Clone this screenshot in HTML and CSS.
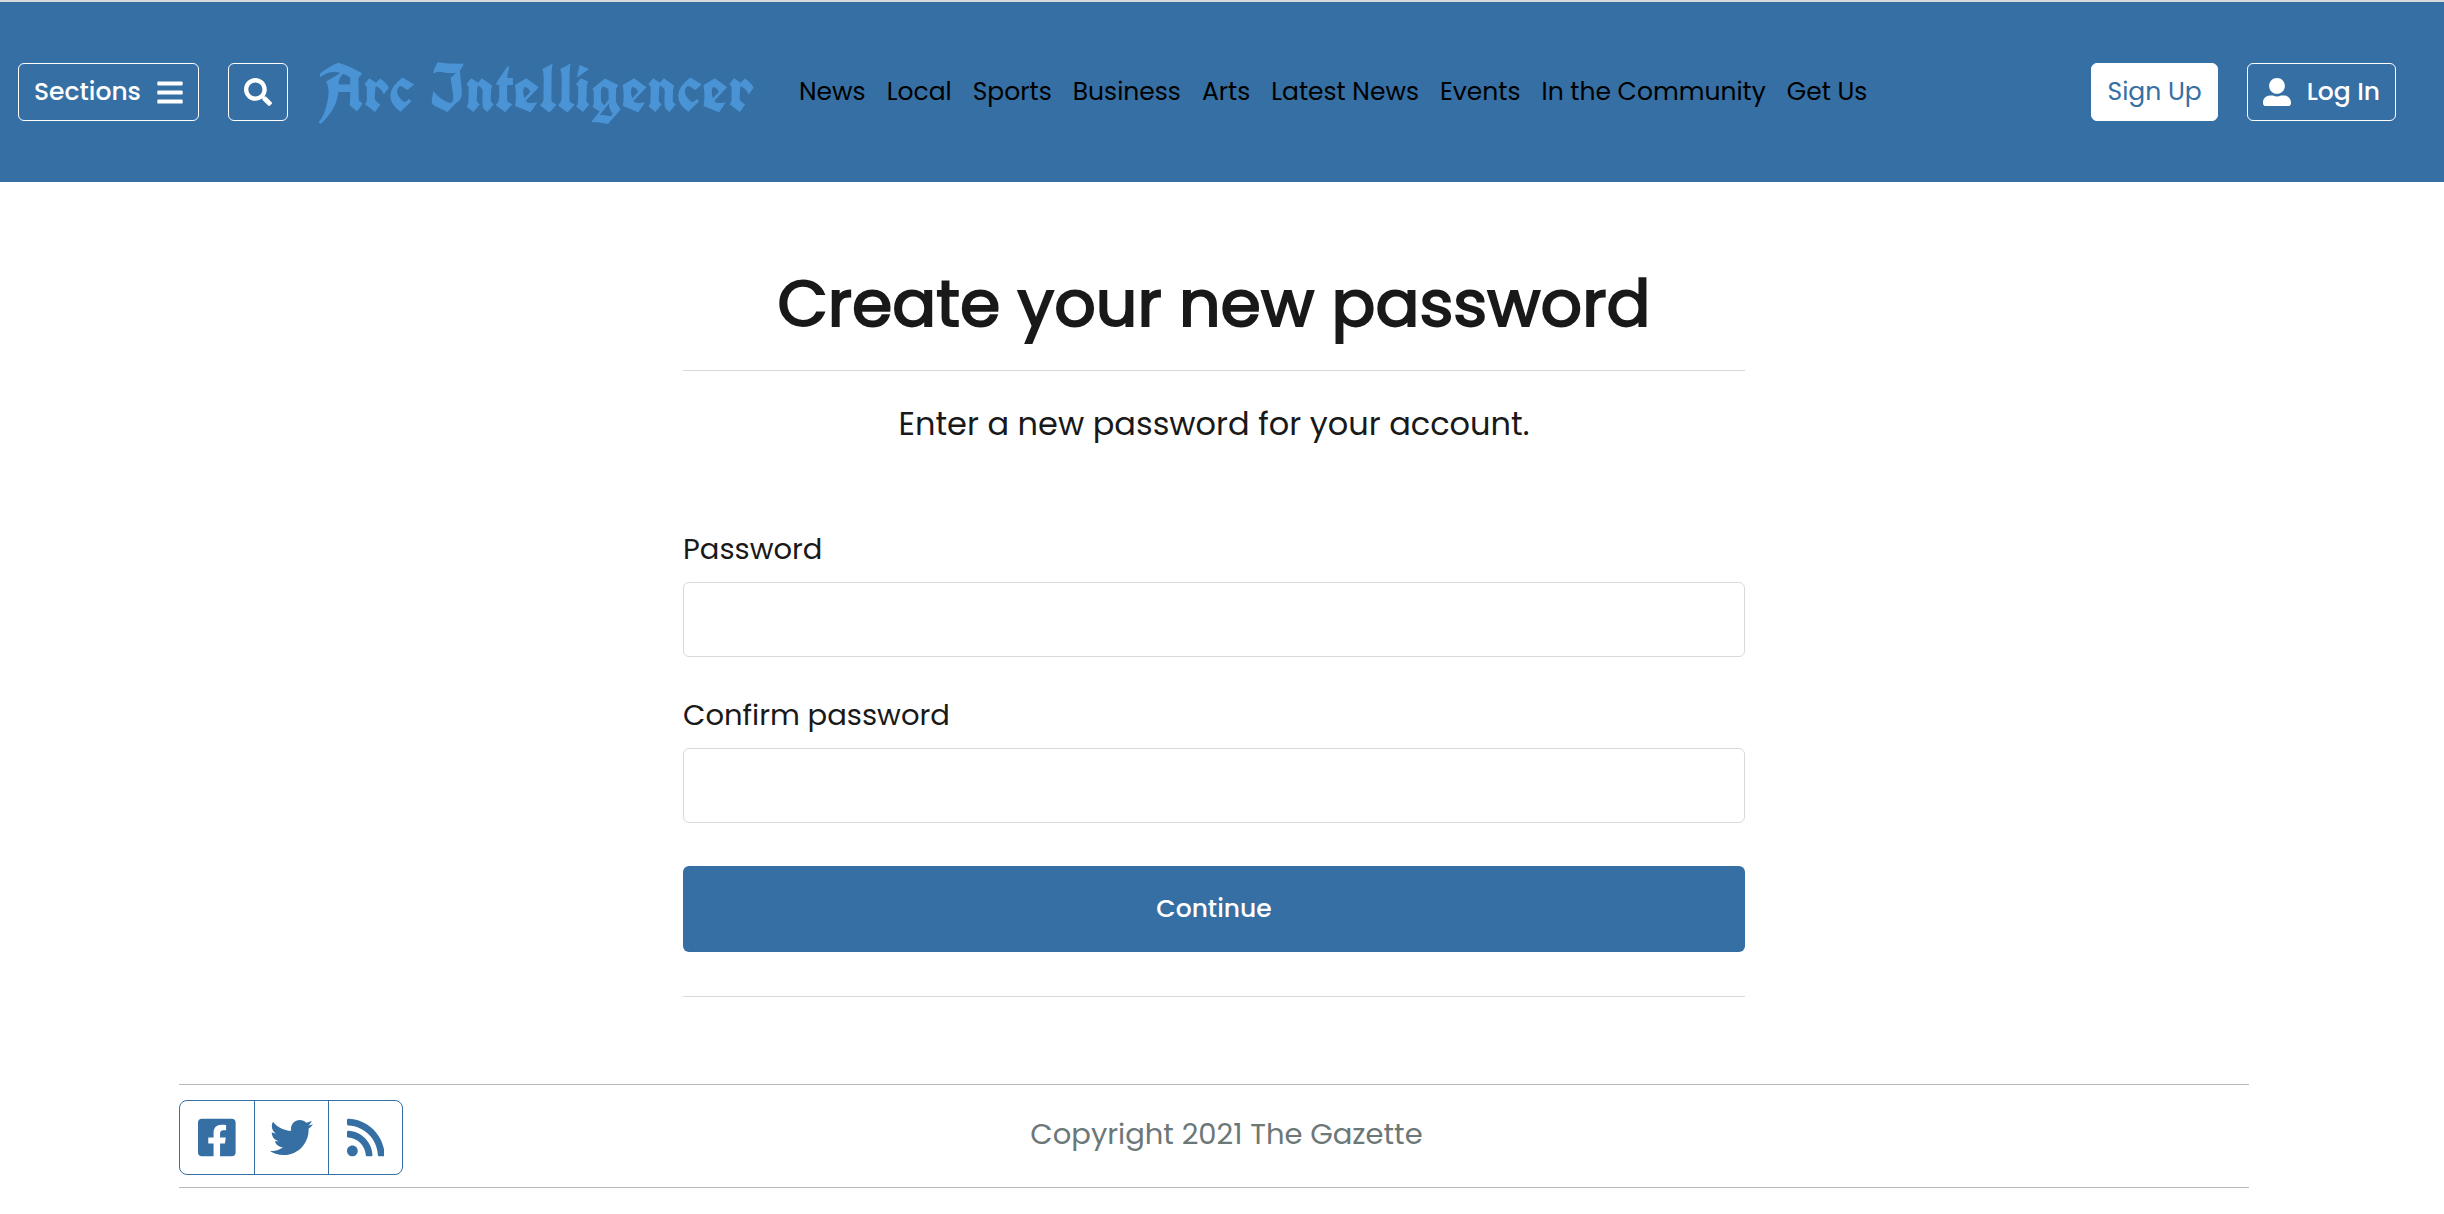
FILE: index.html
```html
<!DOCTYPE html>
<html lang="en">
<head>
<meta charset="utf-8">
<meta name="viewport" content="width=device-width, initial-scale=1">
<title>Create your new password</title>
<link rel="stylesheet" href="styles.css">
</head>
<body>
<header class="header">
  <button class="btn btn-outline" type="button">Sections
    <svg class="icon-bars" viewBox="0 0 448 512" aria-hidden="true"><path d="M16 132h416c8.837 0 16-7.163 16-16V76c0-8.837-7.163-16-16-16H16C7.163 60 0 67.163 0 76v40c0 8.837 7.163 16 16 16zm0 160h416c8.837 0 16-7.163 16-16v-40c0-8.837-7.163-16-16-16H16c-8.837 0-16 7.163-16 16v40c0 8.837 7.163 16 16 16zm0 160h416c8.837 0 16-7.163 16-16v-40c0-8.837-7.163-16-16-16H16c-8.837 0-16 7.163-16 16v40c0 8.837 7.163 16 16 16z"/></svg>
  </button>
  <button class="btn btn-outline" type="button" aria-label="Search">
    <svg class="icon" viewBox="0 0 512 512" aria-hidden="true"><path d="M505 442.7L405.3 343c-4.5-4.5-10.6-7-17-7H372c27.6-35.3 44-79.7 44-128C416 93.1 322.9 0 208 0S0 93.1 0 208s93.1 208 208 208c48.3 0 92.7-16.4 128-44v16.3c0 6.4 2.5 12.5 7 17l99.7 99.7c9.4 9.4 24.6 9.4 33.9 0l28.3-28.3c9.4-9.4 9.4-24.6.1-34zM208 336c-70.7 0-128-57.2-128-128 0-70.7 57.2-128 128-128 70.7 0 128 57.2 128 128 0 70.7-57.2 128-128 128z"/></svg>
  </button>
  <a class="logo" href="#">Arc Intelligencer</a>
  <nav class="nav">
    <a href="#">News</a>
    <a href="#">Local</a>
    <a href="#">Sports</a>
    <a href="#">Business</a>
    <a href="#">Arts</a>
    <a href="#">Latest News</a>
    <a href="#">Events</a>
    <a href="#">In the Community</a>
    <a href="#">Get Us</a>
  </nav>
  <div class="account">
    <button class="btn btn-solid" type="button">Sign Up</button>
    <button class="btn btn-outline" type="button">
      <svg class="icon" viewBox="0 0 512 512" aria-hidden="true"><path d="M256 288c79.5 0 144-64.5 144-144S335.500 0 256 0 112 64.500 112 144s64.500 144 144 144zm128 32h-55.100c-22.200 10.200-46.900 16-72.900 16s-50.600-5.800-72.900-16H128C57.300 320 0 377.300 0 448v16c0 26.500 21.500 48 48 48h416c26.500 0 48-21.500 48-48v-16c0-70.700-57.300-128-128-128z"/></svg>
      Log In</button>
  </div>
</header>
<div class="page">
  <main class="main">
    <h1 class="title">Create your new password</h1>
    <p class="lead">Enter a new password for your account.</p>
    <form class="form">
      <div class="field">
        <label for="password">Password</label>
        <input id="password" type="password">
      </div>
      <div class="field">
        <label for="confirm">Confirm password</label>
        <input id="confirm" type="password">
      </div>
      <button class="submit" type="submit">Continue</button>
    </form>
  </main>
  <footer class="footer">
    <div class="social">
      <a href="#" aria-label="Facebook"><svg viewBox="0 0 448 512" aria-hidden="true"><path d="M400 32H48A48 48 0 0 0 0 80v352a48 48 0 0 0 48 48h137.250V327.690h-63V256h63v-54.640c0-62.150 37-96.480 93.670-96.480 27.140 0 55.520 4.840 55.520 4.840v61h-31.270c-30.810 0-40.420 19.120-40.420 38.730V256h68.780l-11 71.690h-57.780V480H400a48 48 0 0 0 48-48V80a48 48 0 0 0-48-48z"/></svg></a>
      <a href="#" aria-label="Twitter"><svg viewBox="0 0 512 512" aria-hidden="true"><path d="M459.370 151.716c.325 4.548.325 9.097.325 13.645 0 138.720-105.583 298.558-298.558 298.558-59.452 0-114.680-17.219-161.137-47.106 8.447.974 16.568 1.299 25.340 1.299 49.055 0 94.213-16.568 130.274-44.832-46.132-.975-84.792-31.188-98.112-72.772 6.498.974 12.995 1.624 19.818 1.624 9.421 0 18.843-1.300 27.614-3.573-48.081-9.747-84.143-51.980-84.143-102.985v-1.299c13.969 7.797 30.214 12.670 47.431 13.319-28.264-18.843-46.781-51.005-46.781-87.391 0-19.492 5.197-37.360 14.294-52.954 51.655 63.675 129.300 105.258 216.365 109.807-1.624-7.797-2.599-15.918-2.599-24.040 0-57.828 46.782-104.934 104.934-104.934 30.213 0 57.502 12.670 76.670 33.137 23.715-4.548 46.456-13.320 66.599-25.340-7.798 24.366-24.366 44.833-46.132 57.827 21.117-2.273 41.584-8.122 60.426-16.243-14.292 20.791-32.161 39.308-52.628 54.253z"/></svg></a>
      <a href="#" aria-label="RSS"><svg viewBox="0 0 448 512" aria-hidden="true"><path d="M128.081 415.959c0 35.369-28.672 64.041-64.041 64.041S0 451.328 0 415.959s28.672-64.041 64.041-64.041 64.040 28.673 64.040 64.041zm175.660 47.250c-8.354-154.600-132.185-278.587-286.950-286.950C7.656 175.765 0 183.105 0 192.253v48.069c0 8.415 6.490 15.472 14.887 16.018 111.832 7.284 201.473 96.702 208.772 208.772.547 8.397 7.604 14.887 16.018 14.887h48.069c9.149.001 16.489-7.655 15.995-16.790zm144.249.288C439.596 229.677 251.465 40.445 16.503 32.010 7.473 31.686 0 38.981 0 48.016v48.068c0 8.625 6.835 15.645 15.453 15.999 191.179 7.839 344.627 161.316 352.465 352.465.353 8.618 7.373 15.453 15.999 15.453h48.068c9.034-.001 16.329-7.474 16.005-16.504z"/></svg></a>
    </div>
    <p class="copyright">Copyright 2021 The Gazette</p>
  </footer>
</div>
</body>
</html>
```
FILE: styles.css
```css
:root {
  --blue: #356fa4;
  --ink: #191919;
  --rule: #d9d9d9;
}

* { box-sizing: border-box; }

body {
  margin: 0;
  background: #fff;
  color: var(--ink);
  font-family: Poppins, Inter, "Liberation Sans", sans-serif;
  font-size: 25px;
}

h1, p { margin: 0; }

button { font: inherit; cursor: pointer; }

.header {
  display: flex;
  align-items: center;
  min-height: 182px;
  padding: 0 48px 0 18px;
  border-top: 2px solid #d5d9dc;
  background: var(--blue);
}

.btn {
  display: flex;
  align-items: center;
  justify-content: center;
  gap: 16px;
  height: 58px;
  padding: 0 15px;
  border: 1px solid #fff;
  border-radius: 6px;
  white-space: nowrap;
}

.btn + .btn { margin-left: 29px; }

.btn svg { fill: currentColor; }

.btn-outline {
  background: transparent;
  color: #fff;
  font-weight: 500;
}

.btn-solid {
  background: #fff;
  color: var(--blue);
}

.icon { width: 28px; height: 28px; }

.icon-bars { width: 26px; height: 29px; }

.logo {
  margin-left: 30px;
  padding-bottom: 8px;
  color: #4a94d6;
  font-family: UnifrakturCook, "Liberation Serif", serif;
  font-size: 66px;
  font-weight: 700;
  line-height: 66px;
  text-decoration: none;
  white-space: nowrap;
}

.nav {
  display: flex;
  gap: 21px;
  margin-left: 45px;
  white-space: nowrap;
}

.nav a { color: #000; text-decoration: none; }

.account { display: flex; margin-left: auto; }

.page { padding: 0 16px 24px 0; }

.main {
  max-width: 1062px;
  margin: 0 auto;
  padding-top: 80px;
}

.title {
  padding-bottom: 24px;
  border-bottom: 1px solid var(--rule);
  font-size: 65px;
  font-weight: 400;
  line-height: 84px;
  text-align: center;
  -webkit-text-stroke: 2px var(--ink);
}

.lead {
  padding: 29px 0 78px;
  font-size: 32px;
  line-height: 48px;
  text-align: center;
}

.form {
  display: flex;
  flex-direction: column;
  gap: 35px;
  padding-bottom: 44px;
  border-bottom: 1px solid var(--rule);
}

.field {
  display: flex;
  flex-direction: column;
  gap: 10px;
}

.field label {
  font-size: 29px;
  line-height: 46px;
}

.field input {
  width: 100%;
  height: 75px;
  padding: 0 16px;
  border: 1px solid var(--rule);
  border-radius: 6px;
  background: #fff;
  font: inherit;
}

.submit {
  height: 86px;
  margin-top: 8px;
  border: 0;
  border-radius: 6px;
  background: var(--blue);
  color: #fff;
  font-weight: 500;
}

.footer {
  display: grid;
  grid-template-columns: auto 1fr;
  max-width: 2070px;
  margin: 87px auto 0;
  padding: 15px 199px 12px 0;
  border: solid #b8babc;
  border-width: 1px 0;
}

.social {
  display: flex;
  border: 1px solid var(--blue);
  border-radius: 8px;
}

.social a {
  display: flex;
  align-items: center;
  justify-content: center;
  width: 74px;
  height: 73px;
}

.social a + a { border-left: 1px solid var(--blue); }

.social svg { height: 43px; fill: var(--blue); }

.copyright {
  color: #6c7878;
  font-size: 29px;
  line-height: 68px;
  text-align: center;
}
```
